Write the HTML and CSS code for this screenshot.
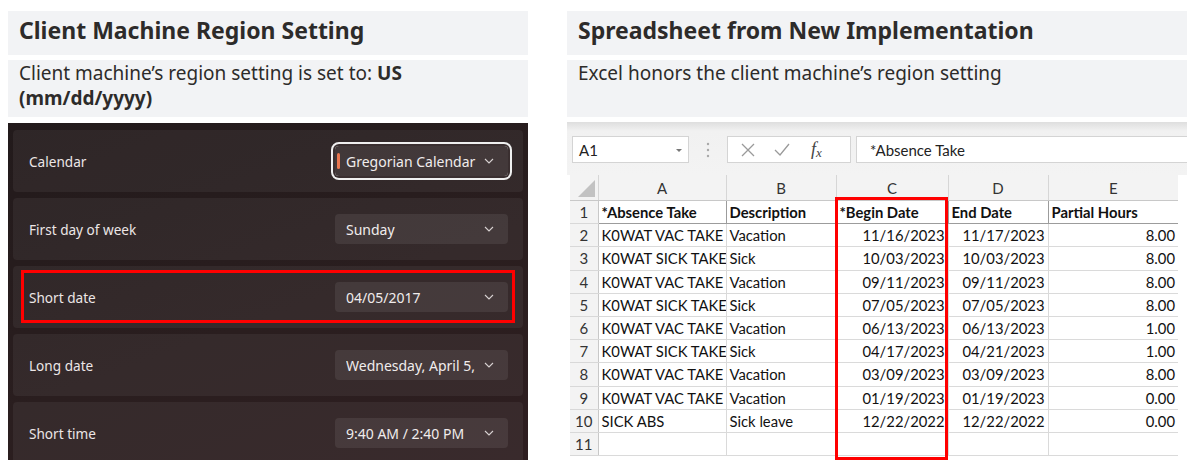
FILE: index.html
```html
<!DOCTYPE html>
<html lang="en">
<head>
    <meta charset="UTF-8">
    <title>Region Setting vs Spreadsheet</title>
    <link rel="stylesheet" href="styles.css">
</head>
<body>
    <div class="page">
        <section class="col col-left">
            <h2 class="title">Client Machine Region Setting</h2>
            <p class="subtitle">Client machine’s region setting is set to: <b>US<br>(mm/dd/yyyy)</b></p>

            <div class="settings">
                <div class="setting">
                    <span>Calendar</span>
                    <div class="select focused">
                        <span class="accent"></span>
                        <span class="value">Gregorian Calendar</span>
                        <svg class="chev" width="10" height="6" viewBox="0 0 10 6"><polyline points="1,1 5,5 9,1" /></svg>
                    </div>
                </div>
                <div class="setting">
                    <span>First day of week</span>
                    <div class="select">
                        <span class="value">Sunday</span>
                        <svg class="chev" width="10" height="6" viewBox="0 0 10 6"><polyline points="1,1 5,5 9,1" /></svg>
                    </div>
                </div>
                <div class="setting marked">
                    <span>Short date</span>
                    <div class="select">
                        <span class="value">04/05/2017</span>
                        <svg class="chev" width="10" height="6" viewBox="0 0 10 6"><polyline points="1,1 5,5 9,1" /></svg>
                    </div>
                </div>
                <div class="setting">
                    <span>Long date</span>
                    <div class="select">
                        <span class="value">Wednesday, April 5,</span>
                        <svg class="chev" width="10" height="6" viewBox="0 0 10 6"><polyline points="1,1 5,5 9,1" /></svg>
                    </div>
                </div>
                <div class="setting">
                    <span>Short time</span>
                    <div class="select">
                        <span class="value">9:40 AM / 2:40 PM</span>
                        <svg class="chev" width="10" height="6" viewBox="0 0 10 6"><polyline points="1,1 5,5 9,1" /></svg>
                    </div>
                </div>
            </div>
        </section>

        <section class="col col-right">
            <h2 class="title">Spreadsheet from New Implementation</h2>
            <p class="subtitle">Excel honors the client machine’s region setting</p>

            <div class="excel">
                <div class="formula-bar">
                    <div class="name-box">A1<span class="nb-arrow"></span></div>
                    <svg class="fb-dots" width="4" height="18" viewBox="0 0 4 18">
                        <circle cx="2" cy="3" r="1.2" />
                        <circle cx="2" cy="9" r="1.2" />
                        <circle cx="2" cy="15" r="1.2" />
                    </svg>
                    <div class="fb-buttons">
                        <svg width="14" height="14" viewBox="0 0 14 14"><path d="M1 1 L13 13 M13 1 L1 13" /></svg>
                        <svg width="16" height="14" viewBox="0 0 16 14"><path d="M1 7 L6 12 L15 1" /></svg>
                        <span class="fx">f<sub>x</sub></span>
                    </div>
                    <div class="fb-input">*Absence Take</div>
                </div>

                <table class="sheet">
                    <colgroup>
                        <col class="c-row"><col class="c-a"><col class="c-b"><col class="c-c"><col class="c-d"><col class="c-e">
                    </colgroup>
                    <thead>
                        <tr><th class="corner"><span></span></th><th>A</th><th>B</th><th>C</th><th>D</th><th>E</th></tr>
                    </thead>
                    <tbody>
                        <tr class="head"><th>1</th><td>*Absence Take</td><td>Description</td><td>*Begin Date</td><td>End Date</td><td>Partial Hours</td></tr>
                        <tr><th>2</th><td>K0WAT VAC TAKE</td><td>Vacation</td><td class="num">11/16/2023</td><td class="num">11/17/2023</td><td class="num">8.00</td></tr>
                        <tr><th>3</th><td>K0WAT SICK TAKE</td><td>Sick</td><td class="num">10/03/2023</td><td class="num">10/03/2023</td><td class="num">8.00</td></tr>
                        <tr><th>4</th><td>K0WAT VAC TAKE</td><td>Vacation</td><td class="num">09/11/2023</td><td class="num">09/11/2023</td><td class="num">8.00</td></tr>
                        <tr><th>5</th><td>K0WAT SICK TAKE</td><td>Sick</td><td class="num">07/05/2023</td><td class="num">07/05/2023</td><td class="num">8.00</td></tr>
                        <tr><th>6</th><td>K0WAT VAC TAKE</td><td>Vacation</td><td class="num">06/13/2023</td><td class="num">06/13/2023</td><td class="num">1.00</td></tr>
                        <tr><th>7</th><td>K0WAT SICK TAKE</td><td>Sick</td><td class="num">04/17/2023</td><td class="num">04/21/2023</td><td class="num">1.00</td></tr>
                        <tr><th>8</th><td>K0WAT VAC TAKE</td><td>Vacation</td><td class="num">03/09/2023</td><td class="num">03/09/2023</td><td class="num">8.00</td></tr>
                        <tr><th>9</th><td>K0WAT VAC TAKE</td><td>Vacation</td><td class="num">01/19/2023</td><td class="num">01/19/2023</td><td class="num">0.00</td></tr>
                        <tr><th>10</th><td>SICK ABS</td><td>Sick leave</td><td class="num">12/22/2022</td><td class="num">12/22/2022</td><td class="num">0.00</td></tr>
                        <tr><th>11</th><td></td><td></td><td></td><td></td><td></td></tr>
                    </tbody>
                </table>

                <div class="col-mark"></div>
            </div>
        </section>
    </div>
</body>
</html>
```

FILE: styles.css
```css
body {
    margin: 0;
    background: #fff;
    font-family: 'Noto Sans', sans-serif;
}

.page {
    display: flex;
    gap: 39px;
    padding: 11px 0 0 8px;
}

.col-left {
    width: 520px;
}

.col-right {
    flex: 1;
}

.title {
    margin: 0;
    height: 44px;
    padding: 0 11px;
    background: #f2f3f5;
    color: #2d2b2a;
    font-size: 23px;
    font-weight: 700;
    line-height: 38px;
}

.subtitle {
    margin: 5px 0 0;
    height: 57px;
    box-sizing: border-box;
    padding: 1px 11px 0;
    background: #f2f3f5;
    color: #2d2b2a;
    font-size: 19px;
    line-height: 25px;
}

.subtitle b {
    font-weight: 700;
}

/* windows settings panel */
.settings {
    margin-top: 6px;
    height: 337px;
    box-sizing: border-box;
    padding: 7px 5px 0;
    display: flex;
    flex-direction: column;
    gap: 6px;
    overflow: hidden;
    background: linear-gradient(160deg, #221a1b 0%, #2a1e1f 55%, #2e1e20 100%);
}

.setting {
    flex: 0 0 62px;
    display: flex;
    align-items: center;
    justify-content: space-between;
    padding: 0 15px 0 16px;
    border-radius: 4px;
    background: rgba(255, 255, 255, 0.055);
    color: #ece6e6;
    font-size: 13.6px;
    position: relative;
}

.setting.marked::after {
    content: '';
    position: absolute;
    left: 8px;
    right: 8px;
    top: 4px;
    bottom: 5px;
    border: 3px solid #ff0000;
}

.select {
    width: 173px;
    height: 30px;
    box-sizing: border-box;
    display: flex;
    align-items: center;
    padding: 0 14px 0 11px;
    border-radius: 4px;
    background: rgba(255, 255, 255, 0.08);
    color: #f0ecec;
    font-size: 14px;
}

.select .value {
    flex: 1;
    white-space: nowrap;
    overflow: hidden;
}

.select.focused {
    position: relative;
    box-shadow: 0 0 0 2px #3a2f30, 0 0 0 4px #efefef;
}

.select .accent {
    position: absolute;
    left: 2px;
    top: 7px;
    width: 3px;
    height: 16px;
    border-radius: 2px;
    background: #e9764f;
}

.chev polyline {
    fill: none;
    stroke: #d8d2d2;
    stroke-width: 1.1;
}

/* excel */
.excel {
    margin-top: 5px;
    position: relative;
    font-family: 'Lato', sans-serif;
}

.formula-bar {
    height: 53px;
    box-sizing: border-box;
    padding: 14px 0 0 5px;
    display: flex;
    align-items: flex-start;
    background: linear-gradient(#dedede 0, #f1f1f1 9px, #f3f3f3 100%);
}

.name-box {
    width: 117px;
    height: 27px;
    box-sizing: border-box;
    padding-left: 6px;
    display: flex;
    align-items: center;
    background: #fff;
    border: 1px solid #d4d4d4;
    font-size: 15px;
    color: #222;
    position: relative;
}

.nb-arrow {
    position: absolute;
    right: 6px;
    top: 12px;
    border-left: 3px solid transparent;
    border-right: 3px solid transparent;
    border-top: 3px solid #777;
}

.fb-dots {
    margin: 5px 17px 0 17px;
}

.fb-dots circle {
    fill: #a8a8a8;
}

.fb-buttons {
    width: 124px;
    height: 27px;
    box-sizing: border-box;
    display: flex;
    align-items: center;
    gap: 19px;
    padding-left: 13px;
    background: #fff;
    border: 1px solid #d4d4d4;
}

.fb-buttons path {
    fill: none;
    stroke: #9a9a9a;
    stroke-width: 1.3;
}

.fx {
    font-family: 'Liberation Serif', serif;
    font-style: italic;
    font-size: 18px;
    color: #444;
    margin-left: 2px;
}

.fx sub {
    font-size: 13px;
    vertical-align: -2px;
}

.fb-input {
    flex: 1;
    height: 27px;
    box-sizing: border-box;
    margin-left: 5px;
    padding-left: 13px;
    display: flex;
    align-items: center;
    background: #fff;
    border: 1px solid #d4d4d4;
    border-right: none;
    font-size: 15px;
    color: #222;
}

.sheet {
    margin-left: 3px;
    border-collapse: collapse;
    table-layout: fixed;
    width: 608px;
    font-size: 14.8px;
    color: #111;
}

.c-row { width: 28px; }
.c-a { width: 128px; }
.c-b { width: 110px; }
.c-c { width: 112px; }
.c-d { width: 100px; }
.c-e { width: 130px; }

.sheet thead th {
    height: 25px;
    padding: 0;
    background: #f3f3f3;
    border-left: 1px solid #d6d6d6;
    border-bottom: 1px solid #c8c8c8;
    font-weight: 400;
    font-size: 15px;
    color: #333;
}

.sheet thead th.corner {
    border-left: none;
    position: relative;
}

.corner span {
    position: absolute;
    right: 3px;
    bottom: 3px;
    width: 0;
    height: 0;
    border-left: 17px solid transparent;
    border-bottom: 17px solid #c2c2c2;
}

.sheet tbody tr {
    height: 23.2px;
}

.sheet tbody th {
    padding: 0;
    background: #f3f3f3;
    border-bottom: 1px solid #d8d8d8;
    border-right: 1px solid #c8c8c8;
    font-weight: 400;
    font-size: 15px;
    color: #333;
    text-align: center;
}

.sheet td {
    padding: 0 3px;
    border-left: 1px solid #dadada;
    border-bottom: 1px solid #dadada;
    white-space: nowrap;
    overflow: hidden;
    line-height: 22px;
}

.sheet tr.head td {
    font-weight: 700;
    border-left-color: #9c9c9c;
    border-bottom-color: #9c9c9c;
}

.sheet td.num {
    text-align: right;
}

.col-mark {
    position: absolute;
    left: 268px;
    top: 75px;
    width: 113px;
    height: 263px;
    box-sizing: border-box;
    border: 3px solid #ff0000;
}
```
